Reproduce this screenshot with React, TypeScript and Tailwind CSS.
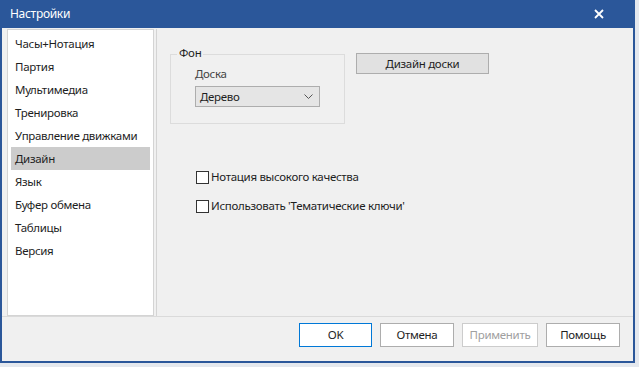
import React from "react";

const items = [
  "Часы+Нотация",
  "Партия",
  "Мультимедиа",
  "Тренировка",
  "Управление движками",
  "Дизайн",
  "Язык",
  "Буфер обмена",
  "Таблицы",
  "Версия",
];

export default function App() {
  const font = { fontFamily: '"Noto Sans", "Open Sans", sans-serif' };
  return (
    <div className="w-[639px] h-[367px] bg-[#e4e8ee] overflow-hidden text-[11.5px] tracking-[-0.3px] text-[#1e1e1e]" style={font}>
      <div className="w-[635px] h-[363px] flex flex-col bg-[#f0f0f0] border-x-2 border-b-2 border-[#2b579a]">
        {/* title bar */}
        <div className="h-[28px] -mx-[2px] bg-[#2b579a] flex items-center justify-between pl-[10px] pr-[31px] text-white shrink-0">
          <span className="text-[12px]">Настройки</span>
          <svg width="10" height="10" viewBox="0 0 10 10">
            <path d="M1 1 L9 9 M9 1 L1 9" stroke="white" strokeWidth="1.8" />
          </svg>
        </div>
        {/* content */}
        <div className="flex h-[289px] shrink-0 pt-[1px] border-b border-[#dadada]">
          <div className="ml-[5px] w-[147px] bg-white border border-[#d4d4d4] pt-[2px] flex flex-col">
            {items.map((t) => (
              <div
                key={t}
                className={`h-[23px] mx-[3px] pl-[4px] flex items-center ${t === "Дизайн" ? "bg-[#cccccc]" : ""}`}
              >
                {t}
              </div>
            ))}
          </div>
          <div className="ml-[2px] flex-1 border-l border-[#d4d4d4] bg-[#f0f0f0] flex flex-col pl-[13px]">
            <div className="flex items-start pt-[20px]">
              <div className="relative w-[175px] h-[70px] border border-[#dcdcdc] mt-[5px] pl-[24px]">
                <span className="absolute -top-[10px] left-[6px] px-[2px] bg-[#f0f0f0] leading-[16px]">Фон</span>
                <div className="pt-[11px] text-[#444] leading-[16px]">Доска</div>
                <div className="mt-[4px] w-[125px] h-[21px] bg-[#e5e5e5] border border-[#adadad] flex items-center justify-between pl-[4px] pr-[6px]">
                  <span>Дерево</span>
                  <svg width="9" height="6" viewBox="0 0 9 6">
                    <path d="M0.5 0.5 L4.5 4.5 L8.5 0.5" stroke="#555" fill="none" strokeWidth="1" />
                  </svg>
                </div>
              </div>
              <div className="ml-[11px] mt-[4px] w-[133px] h-[21px] bg-[#e1e1e1] border border-[#adadad] flex items-center justify-center">
                Дизайн доски
              </div>
            </div>
            <div className="flex flex-col gap-[15px] mt-[46px] pl-[26px]">
              <div className="flex items-center gap-[2px] h-[14px]">
                <div className="w-[13px] h-[13px] bg-white border border-[#333]" />
                <span>Нотация высокого качества</span>
              </div>
              <div className="flex items-center gap-[2px] h-[14px]">
                <div className="w-[13px] h-[13px] bg-white border border-[#333]" />
                <span>Использовать 'Тематические ключи'</span>
              </div>
            </div>
          </div>
        </div>
        {/* buttons */}
        <div className="flex justify-end gap-[8px] pr-[13px] pt-[6px]">
          <div className="w-[73px] h-[24px] bg-white border border-[#0078d7] flex items-center justify-center">OK</div>
          <div className="w-[74px] h-[24px] bg-white border border-[#adadad] flex items-center justify-center">Отмена</div>
          <div className="w-[76px] h-[24px] bg-white border border-[#cccccc] text-[#a0a0a0] flex items-center justify-center">Применить</div>
          <div className="w-[74px] h-[24px] bg-white border border-[#adadad] flex items-center justify-center">Помощь</div>
        </div>
      </div>
    </div>
  );
}
